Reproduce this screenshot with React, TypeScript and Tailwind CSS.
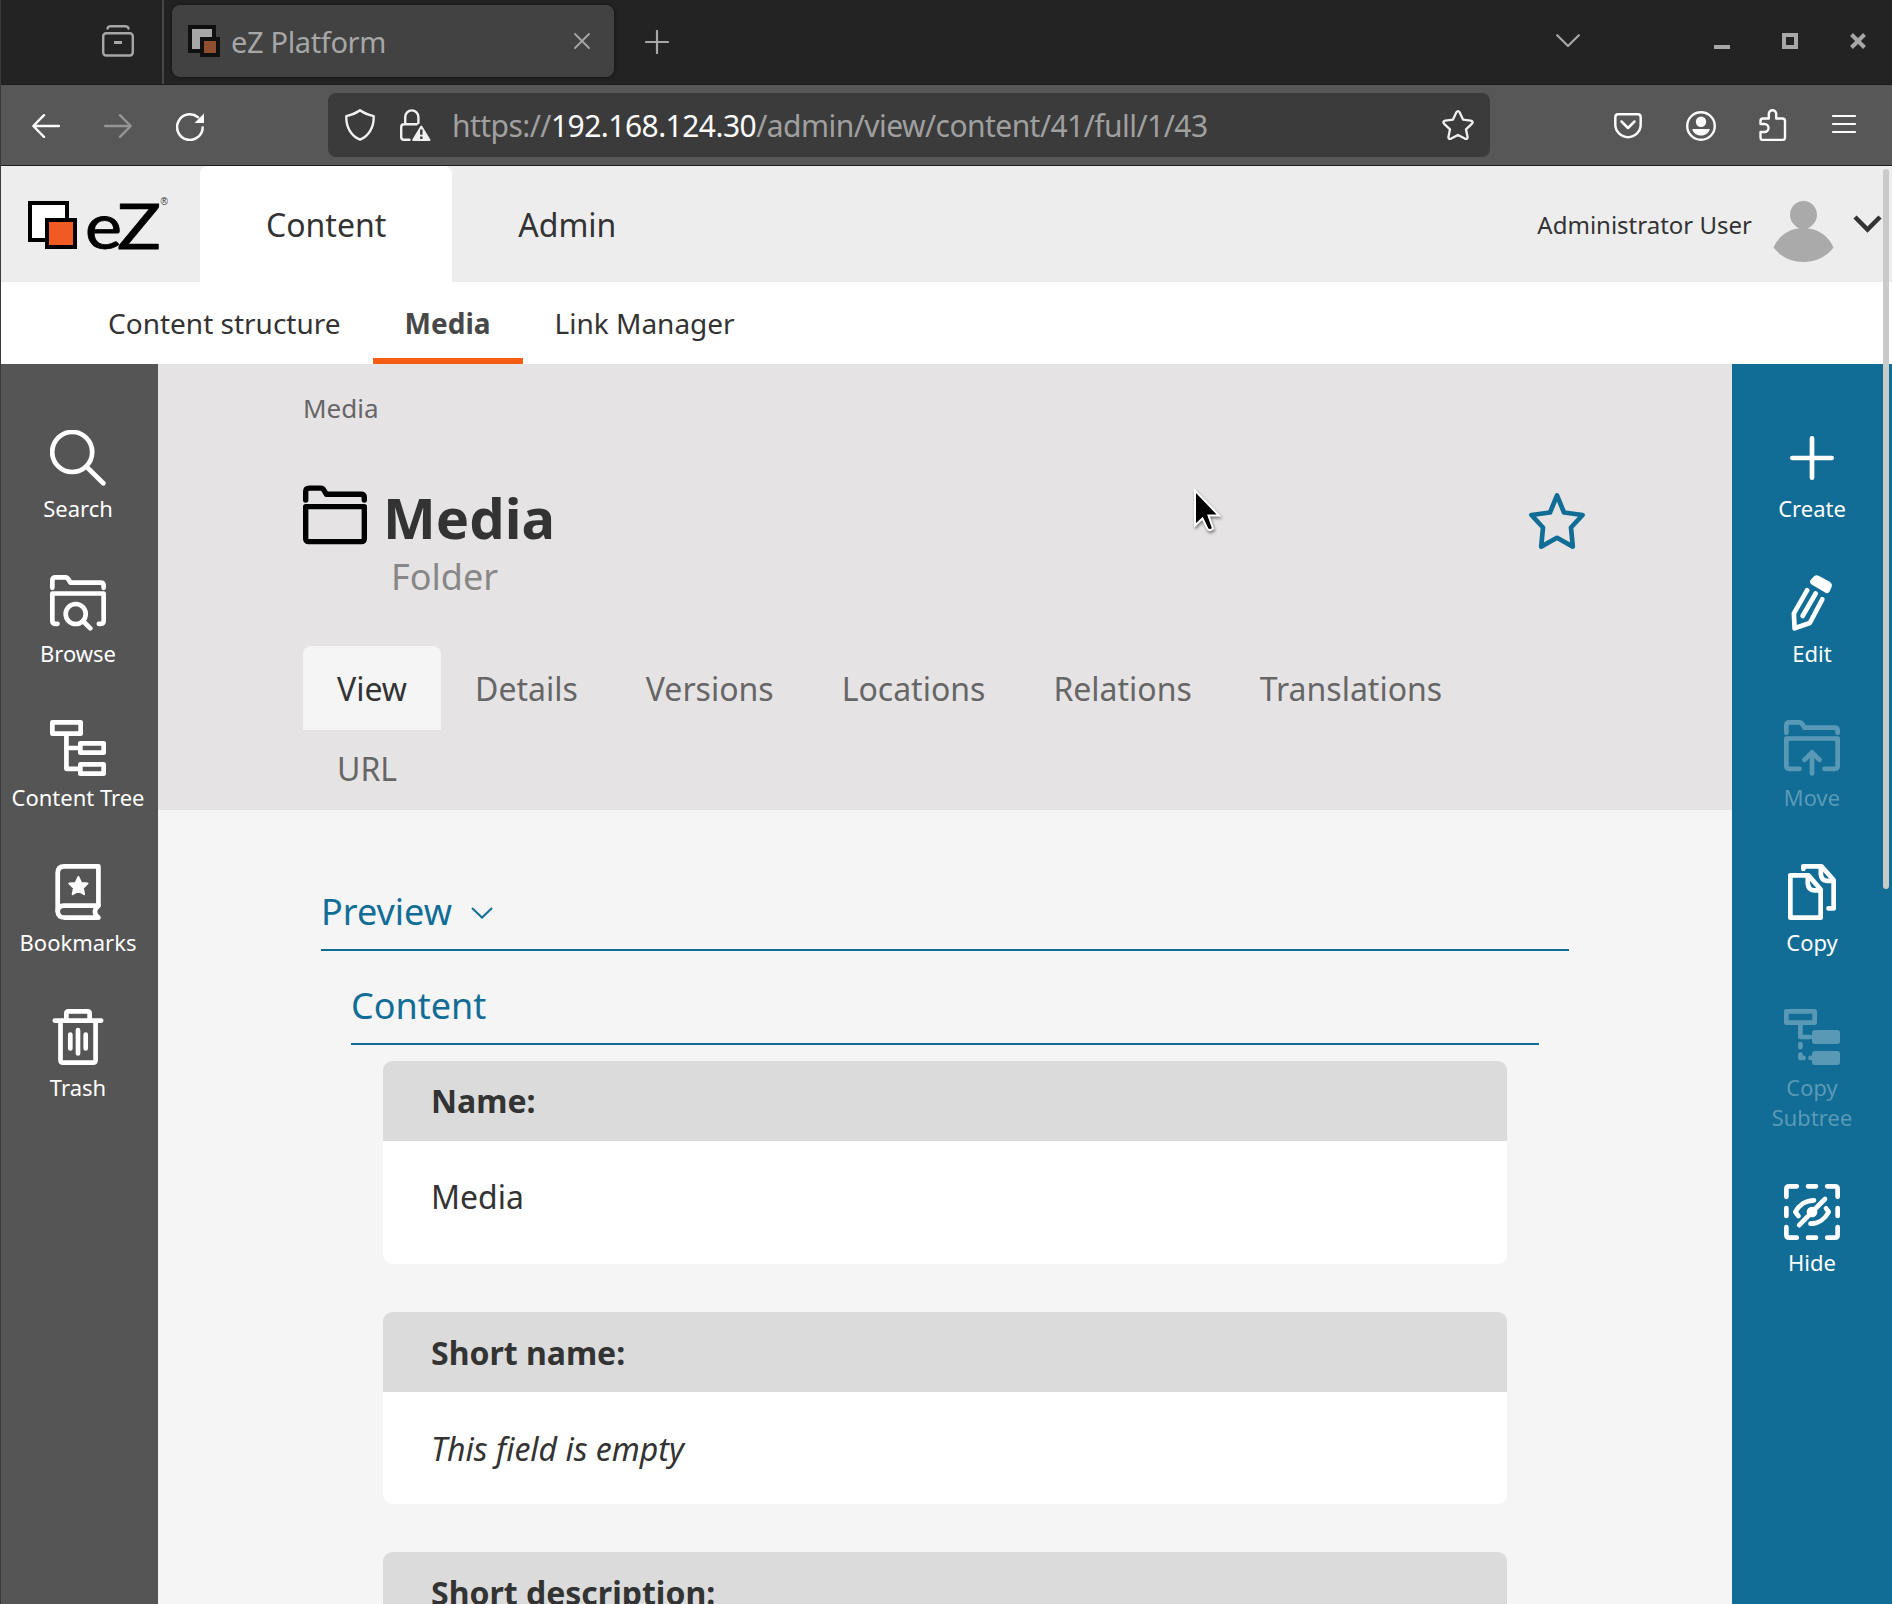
import type { ReactNode } from "react";

/* ---------- Browser chrome icons ---------- */

function Stroke({ w, h, sw = 2, className = "", children }: { w: number; h: number; sw?: number; className?: string; children: ReactNode }) {
  return (
    <svg width={w} height={h} viewBox={`0 0 ${w} ${h}`} fill="none" stroke="currentColor" strokeWidth={sw} strokeLinecap="round" strokeLinejoin="round" className={`shrink-0 ${className}`}>
      {children}
    </svg>
  );
}

function Favicon() {
  return (
    <svg width="32" height="32" viewBox="0 0 32 32" className="shrink-0">
      <rect x="2" y="2" width="24" height="24" fill="#a7a7a7" stroke="#101010" strokeWidth="4" />
      <rect x="14" y="14" width="16" height="16" fill="#8f4f2e" stroke="#101010" strokeWidth="4" />
    </svg>
  );
}

function TabBar() {
  return (
    <div className="flex h-[85px] items-center border-b border-[#1c1c1c] bg-[#232323] text-[#a7a7a7]">
      <div className="flex h-full w-[163px] items-center border-r-2 border-[#474747] pl-[101px]">
        <Stroke w={32} h={32} sw={2.4} className="-mt-[2px]">
          <path d="M5.5 3.5Q6 1.3 9 1.3H23Q26 1.3 26.5 3.5" />
          <rect x="1.2" y="8.2" width="29.6" height="22.3" rx="3" />
          <path d="M12 17.5H20" strokeLinecap="butt" strokeWidth="3" />
        </Stroke>
      </div>
      <div className="-mt-[2px] ml-2 flex h-[72px] w-[442px] items-center rounded-lg bg-[#424242] pl-4 pr-6 shadow-[0_0_4px_rgba(0,0,0,0.5)]">
        <Favicon />
        <span className="ml-[11px] grow whitespace-nowrap text-[29px] leading-none tracking-[-0.35px]">eZ Platform</span>
        <Stroke w={16} h={16} sw={1.8}>
          <path d="M1 1L15 15M15 1L1 15" />
        </Stroke>
      </div>
      <Stroke w={24} h={24} sw={2.2} className="ml-[31px]">
        <path d="M12 1V23M1 12H23" />
      </Stroke>
      <div className="-mt-[2px] ml-auto flex items-center">
        <Stroke w={24} h={14} sw={2.2}>
          <path d="M1.2 1.2L12 12L22.8 1.2" />
        </Stroke>
        <div className="ml-[134px] flex gap-[52px] pr-[26px]">
          <svg width="16" height="16" viewBox="0 0 16 16"><path d="M0 14H16" stroke="currentColor" strokeWidth="4" /></svg>
          <svg width="16" height="16" viewBox="0 0 16 16"><rect x="2" y="2" width="12" height="12" fill="none" stroke="currentColor" strokeWidth="4" /></svg>
          <svg width="16" height="16" viewBox="0 0 16 16"><path d="M1.5 1.5L14.5 14.5M14.5 1.5L1.5 14.5" stroke="currentColor" strokeWidth="4" /></svg>
        </div>
      </div>
    </div>
  );
}

function ToolBar() {
  return (
    <div className="flex h-[81px] items-center border-b border-[#1f1f1f] bg-[#575757] pl-[31px] text-[#fbfbfb]">
      <Stroke w={28} h={24} sw={2.4} className="mt-[2px]">
        <path d="M27 12H1.5M12 1.2L1.3 12L12 22.8" />
      </Stroke>
      <Stroke w={28} h={24} sw={2.4} className="ml-11 mt-[2px] text-[#969696]">
        <path d="M1 12H26.5M16 1.2L26.7 12L16 22.8" />
      </Stroke>
      <Stroke w={28} h={28} sw={2.5} className="ml-11 mt-[3px]">
        <path d="M26.7 14.5A12.8 12.8 0 1 1 22 4.2" />
        <path d="M28 0.5V10H18.5Z" fill="currentColor" stroke="none" />
      </Stroke>
      <div className="ml-[124px] flex h-16 w-[1162px] items-center rounded-lg bg-[#3b3b3b] pl-[17px] pr-4 text-[#f0f0f0]">
        <Stroke w={30} h={32} sw={2.4}>
          <path d="M15 1.3C19 4.5 24 6 28.7 7.2C29 18 24 27 15 30.7C6 27 1 18 1.3 7.2C6 6 11 4.5 15 1.3Z" />
        </Stroke>
        <Stroke w={32} h={32} sw={2.4} className="ml-[25px]">
          <path d="M5.2 15V8A6.6 6.6 0 0 1 18.4 8V14M9.5 30.8H4Q1.2 30.8 1.2 28V18Q1.2 15.2 4 15.2H16.5" />
          <path d="M21.3 17.5L29.5 31H13.2Z" fill="currentColor" strokeWidth="2" />
          <path d="M21.3 20.5V25.8M21.3 27.6V30" stroke="#3b3b3b" strokeWidth="2.4" strokeLinecap="butt" />
        </Stroke>
        <span className="ml-[20px] mt-[2px] grow whitespace-nowrap text-[30px] leading-none tracking-[-0.55px] text-[#a0a0a0]">
          https://<span className="text-[#fbfbfb]">192.168.124.30</span>/admin/view/content/41/full/1/43
        </span>
        <Stroke w={32} h={30} sw={2.3}>
          <path d="M14.3 2.4Q16 0 17.7 2.4L21 9.6L28.8 10.6Q31.8 11.4 29.8 13.8L24 19.4L25.6 27Q25.7 29.8 22.8 28.6L16 25L9.2 28.6Q6.3 29.8 6.4 27L8 19.4L2.2 13.8Q0.2 11.4 3.2 10.6L11 9.6Z" />
        </Stroke>
      </div>
      <Stroke w={28} h={26} sw={2.5} className="ml-[124px] mt-[2px]">
        <path d="M4.2 1.3H23.8Q26.7 1.3 26.7 4.2V11.5A12.7 12.7 0 0 1 1.3 11.5V4.2Q1.3 1.3 4.2 1.3Z" />
        <path d="M7.5 8.5L14 15L20.5 8.5" />
      </Stroke>
      <svg width="30" height="30" viewBox="0 0 30 30" className="ml-11 mt-[2px] shrink-0" fill="currentColor">
        <circle cx="15" cy="15" r="13.8" fill="none" stroke="currentColor" strokeWidth="2.4" />
        <circle cx="15" cy="10.7" r="5.2" />
        <path d="M6.3 18H23.7C23 22 19.5 24.5 15 24.5S7 22 6.3 18Z" />
      </svg>
      <Stroke w={28} h={32} sw={2.4} className="ml-[43px]">
        <path d="M9.8 9.5V5A3.7 3.7 0 0 1 17.2 5V9.5H23.5Q26 9.5 26 12V28.5Q26 31 23.5 31H4Q1.5 31 1.5 28.5V23H5.5A4 4 0 0 0 5.5 15H1.5V12Q1.5 9.5 4 9.5Z" />
      </Stroke>
      <Stroke w={24} h={20} sw={2.2} className="ml-[45px] -mt-[2px]">
        <path d="M1 2H23M1 10H23M1 18H23" />
      </Stroke>
    </div>
  );
}

/* ---------- Application icons on a 56 unit grid ---------- */

function Glyph({ size = 56, className = "", children }: { size?: number; className?: string; children: ReactNode }) {
  return (
    <svg width={size} height={size} viewBox="0 0 56 56" fill="none" stroke="currentColor" strokeWidth="4.7" strokeLinecap="round" strokeLinejoin="round" className={`shrink-0 ${className}`}>
      {children}
    </svg>
  );
}

const folderLid = "M2.35 12.8V5.5Q2.35 2.35 5.5 2.35H15.5Q17.5 2.35 18.5 4.5L20.5 7.7H50.5Q53.65 7.7 53.65 10.5V12.8";

const icons: Record<string, ReactNode> = {
  search: (
    <>
      <circle cx="22.2" cy="22" r="20" />
      <path d="M36.5 36.8L53.3 53.3" />
    </>
  ),
  browse: (
    <>
      <path d={folderLid} />
      <path d="M7.5 48.8H5.2Q2.35 48.8 2.35 46V18.5H53.65V46Q53.65 48.8 50.8 48.8H48.8" />
      <circle cx="25.7" cy="39" r="10" />
      <path d="M33.5 46.5L40.3 53.3" />
    </>
  ),
  tree: (
    <>
      <rect x="2.35" y="2.35" width="28.3" height="11.3" />
      <rect x="30.35" y="23.35" width="23.3" height="9.3" />
      <rect x="30.35" y="44.35" width="23.3" height="9.3" />
      <path d="M16.4 16V48.8H28M16.4 28H28" />
    </>
  ),
  bookmark: (
    <>
      <path d="M48.4 41.3V2.35H14.5Q7.7 2.35 7.7 9V47" />
      <path d="M48.4 41.7H14Q7.7 41.9 7.7 47.5Q8 53.65 15 53.65H48.4Q41.5 47.7 48.4 41.7" />
      <path d="M28.4 13L31.1 18.9L37.5 19.6L32.8 23.9L34.1 30.2L28.4 27L22.7 30.2L24 23.9L19.3 19.6L25.7 18.9Z" fill="currentColor" strokeWidth="2" />
    </>
  ),
  trash: (
    <>
      <path d="M4.8 11.6H51.2M16.35 11V4.5Q16.35 2.35 18.5 2.35H37.5Q39.65 2.35 39.65 4.5V11" />
      <path d="M10.5 13V51Q10.5 53.65 13 53.65H43Q45.6 53.65 45.6 51V13" />
      <path d="M20.3 25.5V39.5M28 21.2V44.5M35.7 25.5V39.5" />
    </>
  ),
  create: <path d="M28 8.35V47.65M8.35 28H47.65" />,
  edit: (
    <>
      <path d="M31 2Q32.5 1 34.5 2L45.5 8.2Q47.2 9.5 46.5 11.2L44.5 16Q43.7 17.5 42.2 16.6L28.3 8.5Q26.5 7.3 27.6 5.8Z" fill="currentColor" strokeWidth="2.5" />
      <path d="M23.2 15.2L9.9 38.3L10.6 53.3L25.8 48L38.3 24.3M31.7 18.5L18.6 41" />
    </>
  ),
  move: (
    <>
      <path d={folderLid} />
      <path d="M15.5 48.8H5.2Q2.35 48.8 2.35 46V18.5H53.65V46Q53.65 48.8 50.8 48.8H40.5" />
      <path d="M28 33V53.5M20.5 39.8L28 32.3L35.5 39.8" />
    </>
  ),
  copy: (
    <>
      <path d="M6.35 11.35H24.5L36.65 25.5V53.65H6.35Z" />
      <path d="M23.8 12V19.5Q24.5 26.3 30 26.3H36" />
      <path d="M19.35 5V2.35H37.5L49.65 16V44.4H44.5" />
      <path d="M36.8 3V10Q37.5 16.8 43 16.8H49" />
    </>
  ),
  subtree: (
    <>
      <rect x="2.35" y="2.35" width="28.3" height="11.3" />
      <path d="M16.4 16V28H26M16.4 35.2V38.2M16.4 45.5V48.9H19.6M26.5 48.9H27" />
      <rect x="28" y="21" width="28" height="14" rx="3" fill="currentColor" stroke="none" />
      <rect x="28" y="42" width="28" height="14" rx="3" fill="currentColor" stroke="none" />
    </>
  ),
  hide: (
    <>
      <path d="M2.35 12.8V5Q2.35 2.35 5 2.35H12.8M43.2 2.35H51Q53.65 2.35 53.65 5V12.8M53.65 43.2V51Q53.65 53.65 51 53.65H43.2M12.8 53.65H5Q2.35 53.65 2.35 51V43.2" />
      <path d="M24 2.35H32M24 53.65H32M2.35 24V32M53.65 24V32" />
      <path d="M30 16.3C22 16.3 15 21 11.3 28L14.5 32M26.5 39.7C34 39.7 41 35 44.7 28L42 24.3M15.2 41.2L41 15" />
      <circle cx="28" cy="28" r="3" fill="currentColor" />
    </>
  ),
};

type Action = { icon: string; label: string; disabled?: boolean };

function ActionRail({ actions, className }: { actions: Action[]; className: string }) {
  return (
    <nav className={`flex shrink-0 flex-col pt-[66px] text-white ${className}`}>
      {actions.map((a) => (
        <div key={a.label} className={a.disabled ? "mb-[52px] flex flex-col items-center opacity-30" : "mb-[52px] flex flex-col items-center"}>
          <Glyph>{icons[a.icon]}</Glyph>
          <span className="mt-[6.75px] w-[140px] whitespace-nowrap text-center text-[22px] leading-[30px]">
            {a.label.split("\n").map((line) => (
              <span key={line} className="block">{line}</span>
            ))}
          </span>
        </div>
      ))}
    </nav>
  );
}

function Logo() {
  return (
    <svg width="146" height="76" viewBox="0 -9 146 76" className="shrink-0 overflow-visible">
      <rect x="3" y="7" width="37" height="37" fill="#fff" stroke="#000" strokeWidth="4" />
      <rect x="20" y="24" width="28" height="27" fill="#f15a22" stroke="#000" strokeWidth="4" />
      <g fontFamily="Lato" fontSize="61" fontWeight="400" stroke="#000" strokeWidth="0.8">
        <text x="58" y="52.5" textLength="37" lengthAdjust="spacingAndGlyphs">e</text>
        <text x="90" y="52.5" textLength="44" lengthAdjust="spacingAndGlyphs">Z</text>
      </g>
      <text x="133.5" y="8.5" fontFamily="Liberation Sans" fontSize="10" fill="#333">®</text>
    </svg>
  );
}

function AppHeader() {
  return (
    <header className="flex h-[116px] bg-[#ededed] text-[#333]">
      <div className="flex w-[199px] items-center pl-[26px] pt-[2px]">
        <Logo />
      </div>
      <div className="flex text-[32px]">
        <div className="flex items-center rounded-t-lg bg-white px-[66px] pt-[2px]">Content</div>
        <div className="flex items-center px-[66px] pt-[2px]">Admin</div>
      </div>
      <div className="ml-auto flex items-center pr-[10px]">
        <span className="mt-[2px] text-[24px]">Administrator User</span>
        <svg width="61" height="61" viewBox="0 0 61 61" fill="#aaa" className="ml-[21px] mt-[15px]">
          <path d="M30.5 0C38 0 44 6 44 14C44 19.5 40 25 34.5 27.5C46 28 56 36 60.5 46.5C53 56 43 61 30.5 61S8 56 0.5 46.5C5 36 15 28 26.5 27.5C21 25 17 19.5 17 14C17 6 23 0 30.5 0Z" />
        </svg>
        <svg width="29" height="18" viewBox="0 0 29 18" className="ml-[19px]">
          <path d="M2 2L14.5 14.5L27 2" fill="none" stroke="#333" strokeWidth="4.5" />
        </svg>
      </div>
    </header>
  );
}

function SubNav() {
  return (
    <nav className="flex h-[82px] bg-white pl-[75px] text-[28px] text-[#333]">
      <span className="flex items-center px-8">Content structure</span>
      <span className="flex items-center border-b-[6px] border-[#f65d12] px-8 pt-[6px] font-bold text-[#484848]">Media</span>
      <span className="flex items-center px-8">Link Manager</span>
    </nav>
  );
}

const tabs = ["View", "Details", "Versions", "Locations", "Relations", "Translations", "URL"];

function ContentHeader() {
  return (
    <section className="h-[446px] bg-[#e5e3e4] px-[145px]">
      <div className="pt-[26px] text-[26px] leading-[36px] text-[#666]">Media</div>
      <div className="flex pt-[56px]">
        <Glyph size={64} className="mt-[3px] text-black">
          <path d={folderLid} transform="translate(0 0.4)" />
          <path d="M2.35 18.9H53.65V46.8Q53.65 49.5 51 49.5H5Q2.35 49.5 2.35 46.8Z" />
        </Glyph>
        <div className="ml-4 grow">
          <h1 className="-mt-px text-[56px] font-bold leading-[72px] text-[#333]">Media</h1>
          <div className="mt-[2px] pl-2 text-[36px] leading-[44px] text-[#878787]">Folder</div>
        </div>
        <Glyph className="mt-[11px] mr-[2px] text-[#116d96]">
          <path d="M28 2.4L35 19.5L53.6 22L42 34.5L43.8 53.6L28 44.8L12.2 53.6L14 34.5L2.4 22L21 19.5Z" />
        </Glyph>
      </div>
      <ul className="mt-[47px] flex flex-wrap text-[32px] text-[#666]">
        {tabs.map((t) => (
          <li key={t} className={t === "View" ? "-mb-1 flex h-[84px] items-center rounded-t-lg bg-[#f5f5f5] px-[34px] pt-[2px] text-[#333]" : "-mb-1 flex h-[84px] items-center px-[34px] pt-[2px]"}>
            {t}
          </li>
        ))}
      </ul>
    </section>
  );
}

function Field({ label, first, children }: { label: string; first?: boolean; children: ReactNode }) {
  return (
    <div className="mb-12 overflow-hidden rounded-[9px] bg-white text-[32px] text-[#333]">
      <div className={first ? "flex h-20 items-center bg-[#dbdbdb] px-12 font-bold" : "flex h-20 items-center bg-[#dbdbdb] px-12 pt-[2px] font-bold"}>{label}</div>
      <div className={first ? "h-[123px] px-12 pt-8 leading-[48px]" : "h-[112px] px-12 pt-[33px] leading-[48px]"}>{children}</div>
    </div>
  );
}

function Preview() {
  return (
    <section className="px-[163px] pt-[76px]">
      <h2 className="flex h-[65px] items-start border-b-2 border-[#116d96] text-[36px] leading-[52px] text-[#116d96]">
        Preview
        <svg width="22" height="12" viewBox="0 0 22 12" className="ml-[19px] mt-[21px]">
          <path d="M1 1L11 10.5L21 1" fill="none" stroke="currentColor" strokeWidth="2" />
        </svg>
      </h2>
      <div className="mx-[30px] mt-[29px]">
        <h3 className="h-[65px] border-b-2 border-[#116d96] text-[36px] leading-[52px] text-[#116d96]">Content</h3>
        <div className="mx-8 mt-4">
          <Field label="Name:" first>Media</Field>
          <Field label="Short name:"><em>This field is empty</em></Field>
          <Field label="Short description:">{null}</Field>
        </div>
      </div>
    </section>
  );
}

export default function App() {
  return (
    <div className="relative h-[1604px] w-[1892px] overflow-hidden border-l border-[#3a3a3a] bg-[#f5f5f5] font-['Noto_Sans',sans-serif]">
      <TabBar />
      <ToolBar />
      <AppHeader />
      <SubNav />
      <div className="flex h-[1240px]">
        <ActionRail
          className="w-[157px] bg-[#555] pr-[3px]"
          actions={[
            { icon: "search", label: "Search" },
            { icon: "browse", label: "Browse" },
            { icon: "tree", label: "Content Tree" },
            { icon: "bookmark", label: "Bookmarks" },
            { icon: "trash", label: "Trash" },
          ]}
        />
        <main className="min-w-0 grow overflow-hidden">
          <ContentHeader />
          <Preview />
        </main>
        <ActionRail
          className="w-[160px] bg-[#116d96]"
          actions={[
            { icon: "create", label: "Create" },
            { icon: "edit", label: "Edit" },
            { icon: "move", label: "Move", disabled: true },
            { icon: "copy", label: "Copy" },
            { icon: "subtree", label: "Copy\nSubtree", disabled: true },
            { icon: "hide", label: "Hide" },
          ]}
        />
      </div>

      {/* Overlay scrollbar thumb */}
      <div className="absolute right-[3px] top-[169px] h-[720px] w-[6px] rounded-full bg-[#cacaca]" />

      {/* Mouse pointer */}
      <svg width="32" height="46" viewBox="0 0 32 46" className="absolute left-[1192px] top-[487px] drop-shadow-[1px_2px_1.5px_rgba(0,0,0,0.45)]">
        <path d="M2 3.5V38.5L9.5 31.5L14.5 42Q17 44.5 20 41.5L15.5 28.5H26Z" fill="#000" stroke="#fff" strokeWidth="2" />
      </svg>
    </div>
  );
}
